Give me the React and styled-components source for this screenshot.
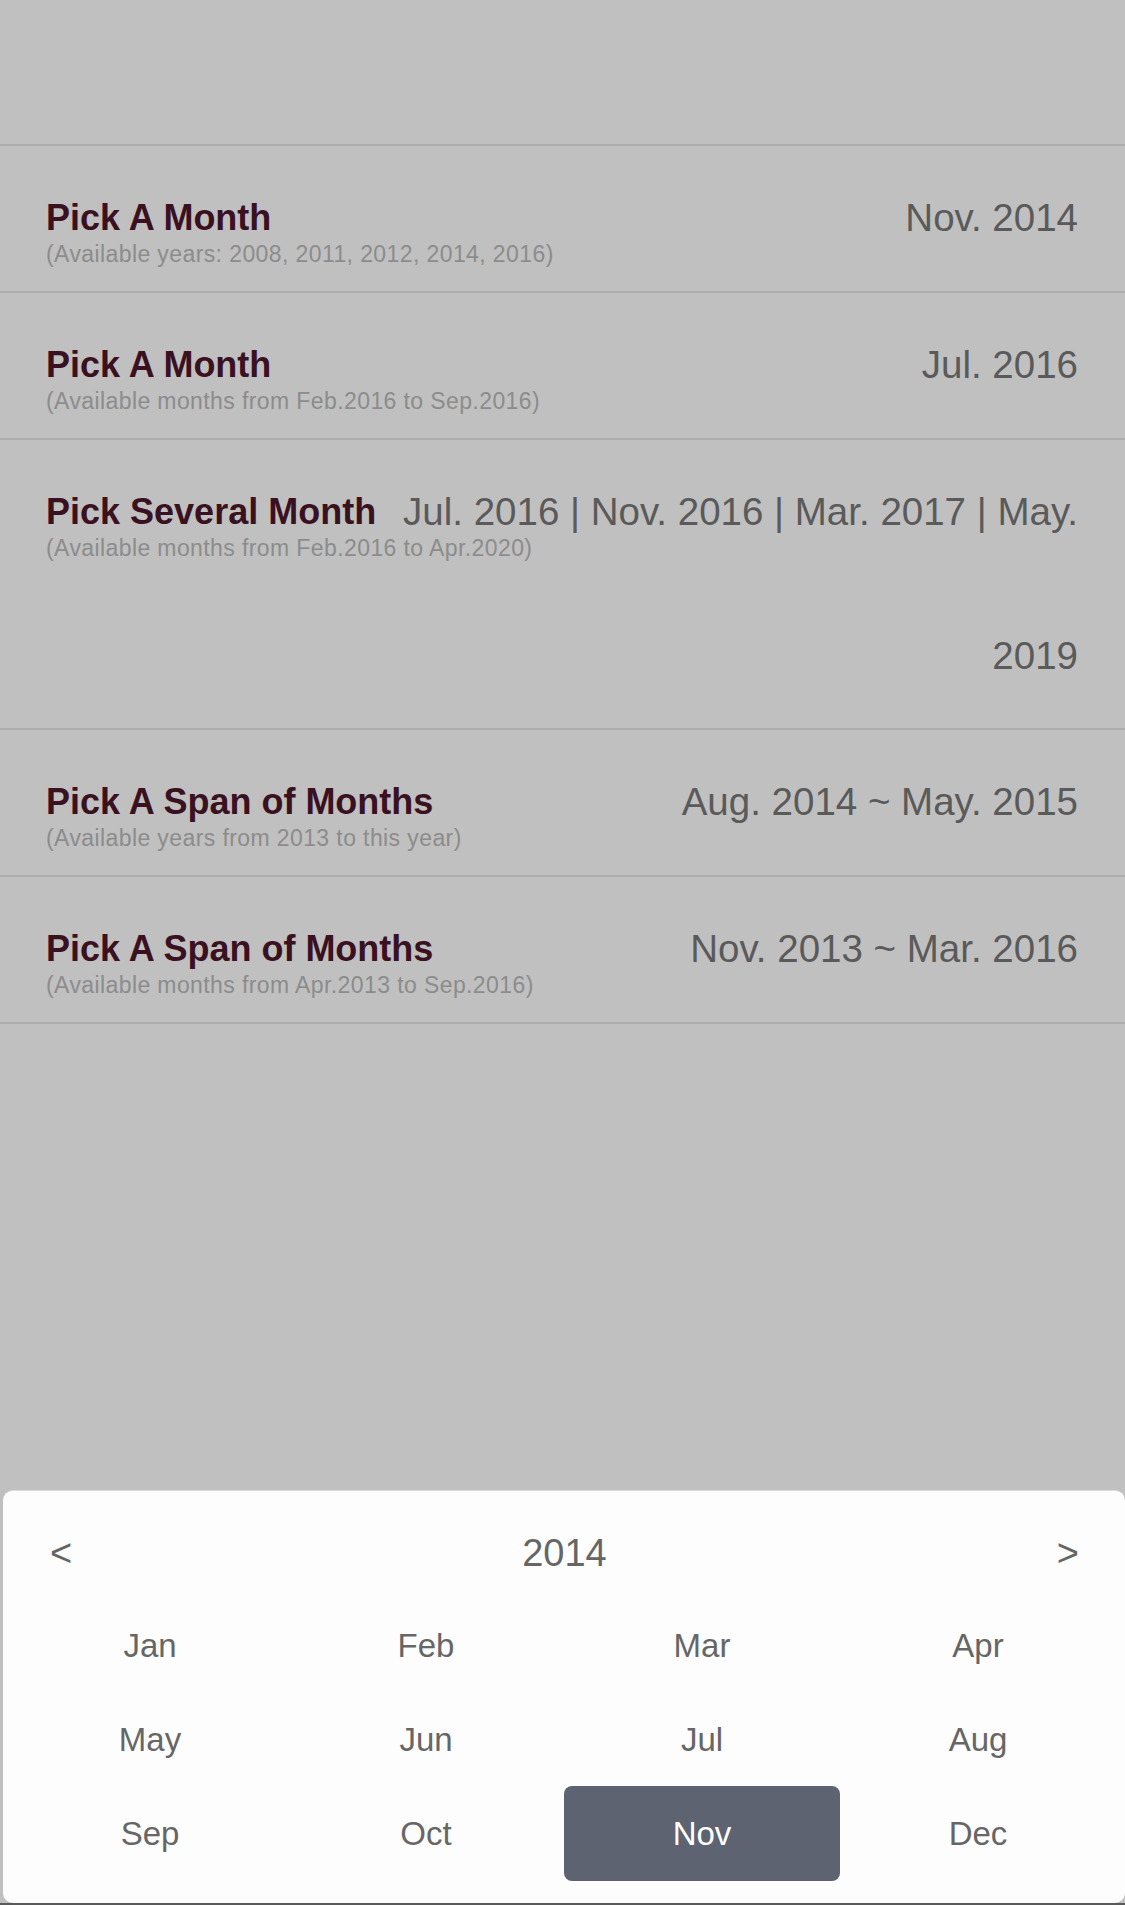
import React from "react";
import styled, { createGlobalStyle } from "styled-components";

const GlobalStyle = createGlobalStyle`
  html, body {
    margin: 0;
    padding: 0;
    background: #c0c0c0;
  }
  body {
    font-family: "Liberation Sans", Arial, Helvetica, sans-serif;
    min-height: 1905px;
  }
  * { box-sizing: border-box; }
`;

const Page = styled.div`
  width: 1125px;
  min-height: 1905px;
  background: #c0c0c0;
`;

const TopBar = styled.div`
  height: 144px;
`;

const List = styled.div`
  border-top: 2px solid #adadad;
`;

const Row = styled.div`
  display: flex;
  align-items: flex-start;
  min-height: 147px;
  padding: 0 47px 0 46px;
  border-bottom: 2px solid #adadad;
`;

const Label = styled.div`
  flex-shrink: 0;
  padding-top: 52px;
`;

const Title = styled.div`
  font-size: 36px;
  line-height: 40px;
  font-weight: 700;
  color: #3a1120;
  white-space: nowrap;
`;

const Sub = styled.div`
  width: 0;
  overflow: visible;
  margin-top: 2px;
  font-size: 23px;
  line-height: 28px;
  letter-spacing: 0.4px;
  color: #8c8c8c;
  white-space: nowrap;
`;

const Value = styled.div`
  flex: 1;
  display: flex;
  flex-wrap: wrap;
  justify-content: flex-end;
  column-gap: 10.7px;
  row-gap: 102px;
  margin-left: 20px;
  padding: 51px 0 51px;
  font-size: 38.5px;
  line-height: 42px;
  color: #5a5a5a;
`;

const Word = styled.span`
  white-space: nowrap;
`;

const Sheet = styled.div`
  position: fixed;
  left: 3px;
  right: 0;
  bottom: 2px;
  background: #fdfdfd;
  border-top: 1px solid #dcdcdc;
  border-radius: 10px;
  padding: 0 9px 22px 9px;
`;

const BottomEdge = styled.div`
  position: fixed;
  left: 0;
  right: 0;
  bottom: 0;
  height: 2px;
  background: #5a5a5a;
`;

const SheetHeader = styled.div`
  display: flex;
  align-items: center;
  justify-content: space-between;
  height: 92px;
  margin-top: 16px;
  padding: 0 37px 0 38px;
  color: #666;
  font-size: 38px;
`;

const Arrow = styled.span`
  font-size: 38px;
  color: #666;
  cursor: pointer;
`;

const Year = styled.span`
  font-size: 38px;
  color: #666;
`;

const MonthGrid = styled.div`
  display: grid;
  grid-template-columns: repeat(4, 276px);
  grid-auto-rows: 94px;
`;

const MonthCell = styled.div`
  display: flex;
  align-items: center;
  justify-content: center;
  font-size: 33px;
  border-radius: 8px;
  color: ${(p) => (p.$active ? "#ffffff" : "#666666")};
  background: ${(p) => (p.$active ? "#5d6370" : "transparent")};
  margin: ${(p) => (p.$active ? "-1px 0 0 0" : "0")};
`;

const rows = [
  { title: "Pick A Month", sub: "(Available years: 2008, 2011, 2012, 2014, 2016)", value: "Nov. 2014" },
  { title: "Pick A Month", sub: "(Available months from Feb.2016 to Sep.2016)", value: "Jul. 2016" },
  { title: "Pick Several Month", sub: "(Available months from Feb.2016 to Apr.2020)", value: "Jul. 2016 | Nov. 2016 | Mar. 2017 | May. 2019" },
  { title: "Pick A Span of Months", sub: "(Available years from 2013 to this year)", value: "Aug. 2014 ~ May. 2015" },
  { title: "Pick A Span of Months", sub: "(Available months from Apr.2013 to Sep.2016)", value: "Nov. 2013 ~ Mar. 2016" },
];

const months = ["Jan", "Feb", "Mar", "Apr", "May", "Jun", "Jul", "Aug", "Sep", "Oct", "Nov", "Dec"];

export default function App() {
  return (
    <>
      <GlobalStyle />
      <Page>
        <TopBar />
        <List>
          {rows.map((r, i) => (
            <Row key={i}>
              <Label>
                <Title>{r.title}</Title>
                <Sub>{r.sub}</Sub>
              </Label>
              <Value>
                {r.value.split(" ").map((w, j) => (
                  <Word key={j}>{w}</Word>
                ))}
              </Value>
            </Row>
          ))}
        </List>
      </Page>
      <Sheet>
        <SheetHeader>
          <Arrow>&lt;</Arrow>
          <Year>2014</Year>
          <Arrow>&gt;</Arrow>
        </SheetHeader>
        <MonthGrid>
          {months.map((m) => (
            <MonthCell key={m} $active={m === "Nov"}>
              {m}
            </MonthCell>
          ))}
        </MonthGrid>
      </Sheet>
      <BottomEdge />
    </>
  );
}
